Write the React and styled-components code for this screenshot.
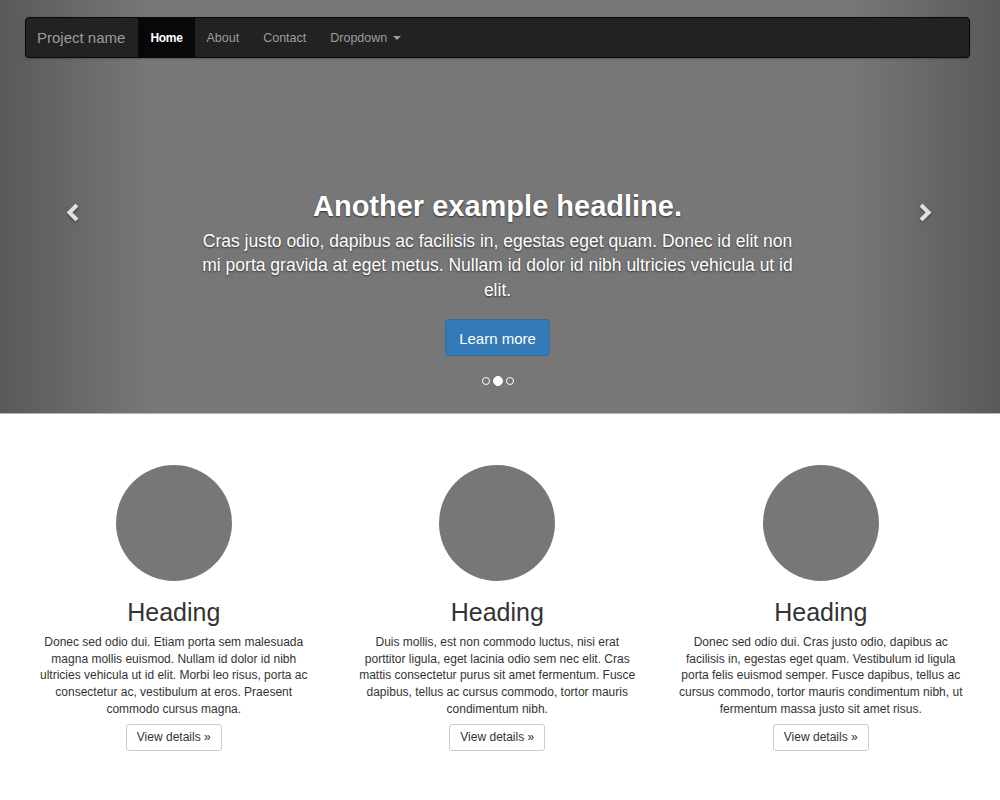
import React from "react";
import styled, { createGlobalStyle } from "styled-components";

const GlobalStyle = createGlobalStyle`
  body {
    margin: 0;
    background: #fff;
    font-family: "Liberation Sans", Arial, Helvetica, sans-serif;
    color: #333;
  }
`;

const Page = styled.div`
  width: 1000px;
  overflow: hidden;
`;

const Carousel = styled.div`
  position: relative;
  height: 414px;
  background: #777;
  border-bottom: 1px solid #b4b4b4;
  display: flex;
  flex-direction: column;
  align-items: center;
  justify-content: flex-end;
  padding: 0 5px 27px 0;
  box-sizing: border-box;
`;

const NavWrap = styled.div`
  position: absolute;
  top: 17px;
  left: 25px;
  right: 30px;
  z-index: 20;
`;

const Navbar = styled.nav`
  display: flex;
  align-items: stretch;
  height: 41px;
  background: #222;
  border: 1px solid #080808;
  border-radius: 4px;
  box-sizing: border-box;
  box-shadow: 0 1px 2px rgba(0, 0, 0, 0.25);
  overflow: hidden;
`;

const Brand = styled.a`
  display: flex;
  align-items: center;
  padding: 0 13px 0 11px;
  font-size: 15px;
  color: #9d9d9d;
  text-decoration: none;
`;

const NavLink = styled.a`
  display: flex;
  align-items: center;
  gap: 5px;
  padding: 0 12px;
  font-size: ${props => (props.active ? "12px" : "12.5px")};
  text-decoration: none;
  color: ${props => (props.active ? "#fff" : "#9d9d9d")};
  background: ${props => (props.active ? "#080808" : "transparent")};
  font-weight: ${props => (props.active ? "bold" : "normal")};
  letter-spacing: ${props => (props.active ? "-0.3px" : "0")};
`;

const Caret = styled.span`
  display: inline-block;
  width: 0;
  height: 0;
  border-top: 4px solid #9d9d9d;
  border-left: 4px solid transparent;
  border-right: 4px solid transparent;
  margin-left: 1px;
`;

const Control = styled.div`
  position: absolute;
  top: 0;
  bottom: 0;
  width: 150px;
  ${props => (props.side === "left" ? "left: 0;" : "right: 0;")}
  background: linear-gradient(
    ${props => (props.side === "left" ? "to right" : "to left")},
    rgba(0, 0, 0, 0.25) 0,
    rgba(0, 0, 0, 0) 100%
  );
  display: flex;
  align-items: center;
  justify-content: center;
  padding-top: 12px;
  box-sizing: border-box;
  ${props => (props.side === "left" ? "padding-right: 5px;" : "padding-left: 0;")}
`;

const Chevron = styled.svg`
  width: 17px;
  height: 21px;
  filter: drop-shadow(0 1px 1px rgba(0, 0, 0, 0.5));
`;

const Caption = styled.div`
  width: 610px;
  text-align: center;
  color: #fff;
  text-shadow: 0 1px 2px rgba(0, 0, 0, 0.6);
  display: flex;
  flex-direction: column;
  align-items: center;
`;

const Headline = styled.h1`
  margin: 0 0 7px;
  font-size: 29px;
  line-height: 32px;
  font-weight: bold;
`;

const Lead = styled.p`
  margin: 0 0 17px;
  font-size: 17.5px;
  line-height: 24.5px;
`;

const PrimaryButton = styled.a`
  display: inline-block;
  padding: 0 13px;
  height: 37px;
  line-height: 37px;
  box-sizing: border-box;
  background: #337ab7;
  border: 1px solid #2e6da4;
  border-radius: 4px;
  color: #fff;
  font-size: 15px;
  text-shadow: none;
  text-decoration: none;
`;

const Indicators = styled.ol`
  list-style: none;
  margin: 20px 0 0;
  padding: 0;
  display: flex;
  align-items: center;
  gap: 3px;
`;

const Dot = styled.li`
  box-sizing: border-box;
  width: ${props => (props.active ? "10px" : "8px")};
  height: ${props => (props.active ? "10px" : "8px")};
  border-radius: 50%;
  border: 1px solid #fff;
  background: ${props => (props.active ? "#fff" : "transparent")};
`;

const Marketing = styled.div`
  display: grid;
  grid-template-columns: repeat(3, 323.5px);
  padding: 51px 0 0 12px;
`;

const Column = styled.div`
  display: flex;
  flex-direction: column;
  align-items: center;
  text-align: center;
`;

const Circle = styled.div`
  width: 116px;
  height: 116px;
  border-radius: 50%;
  background: #777;
`;

const Heading = styled.h2`
  margin: 17px 0 8px;
  font-size: 25px;
  line-height: 28px;
  font-weight: normal;
  color: #333;
`;

const Text = styled.p`
  width: 285px;
  margin: 0 0 6px;
  font-size: 12px;
  line-height: 16.7px;
  color: #333;
`;

const DefaultButton = styled.a`
  display: inline-block;
  box-sizing: border-box;
  height: 27px;
  line-height: 25px;
  padding: 0 10px;
  border: 1px solid #ccc;
  border-radius: 3px;
  background: #fff;
  color: #333;
  font-size: 12px;
  text-decoration: none;
`;

const columns = [
  "Donec sed odio dui. Etiam porta sem malesuada magna mollis euismod. Nullam id dolor id nibh ultricies vehicula ut id elit. Morbi leo risus, porta ac consectetur ac, vestibulum at eros. Praesent commodo cursus magna.",
  "Duis mollis, est non commodo luctus, nisi erat porttitor ligula, eget lacinia odio sem nec elit. Cras mattis consectetur purus sit amet fermentum. Fusce dapibus, tellus ac cursus commodo, tortor mauris condimentum nibh.",
  "Donec sed odio dui. Cras justo odio, dapibus ac facilisis in, egestas eget quam. Vestibulum id ligula porta felis euismod semper. Fusce dapibus, tellus ac cursus commodo, tortor mauris condimentum nibh, ut fermentum massa justo sit amet risus.",
];

export default function App() {
  return (
    <Page>
      <GlobalStyle />
      <Carousel>
        <NavWrap>
          <Navbar>
            <Brand href="#">Project name</Brand>
            <NavLink href="#" active>
              Home
            </NavLink>
            <NavLink href="#">About</NavLink>
            <NavLink href="#">Contact</NavLink>
            <NavLink href="#">
              Dropdown <Caret />
            </NavLink>
          </Navbar>
        </NavWrap>

        <Control side="left">
          <Chevron viewBox="0 0 17 21">
            <polyline
              points="13,3 5.5,10.5 13,18"
              fill="none"
              stroke="#e0e0e0"
              strokeWidth="4.2"
              strokeLinejoin="miter"
            />
          </Chevron>
        </Control>
        <Control side="right">
          <Chevron viewBox="0 0 17 21">
            <polyline
              points="4,3 11.5,10.5 4,18"
              fill="none"
              stroke="#e0e0e0"
              strokeWidth="4.2"
              strokeLinejoin="miter"
            />
          </Chevron>
        </Control>

        <Caption>
          <Headline>Another example headline.</Headline>
          <Lead>
            Cras justo odio, dapibus ac facilisis in, egestas eget quam. Donec
            id elit non mi porta gravida at eget metus. Nullam id dolor id nibh
            ultricies vehicula ut id elit.
          </Lead>
          <PrimaryButton href="#">Learn more</PrimaryButton>
        </Caption>
        <Indicators>
          <Dot />
          <Dot active />
          <Dot />
        </Indicators>
      </Carousel>

      <Marketing>
        {columns.map((text, i) => (
          <Column key={i}>
            <Circle />
            <Heading>Heading</Heading>
            <Text>{text}</Text>
            <DefaultButton href="#">View details »</DefaultButton>
          </Column>
        ))}
      </Marketing>
    </Page>
  );
}
